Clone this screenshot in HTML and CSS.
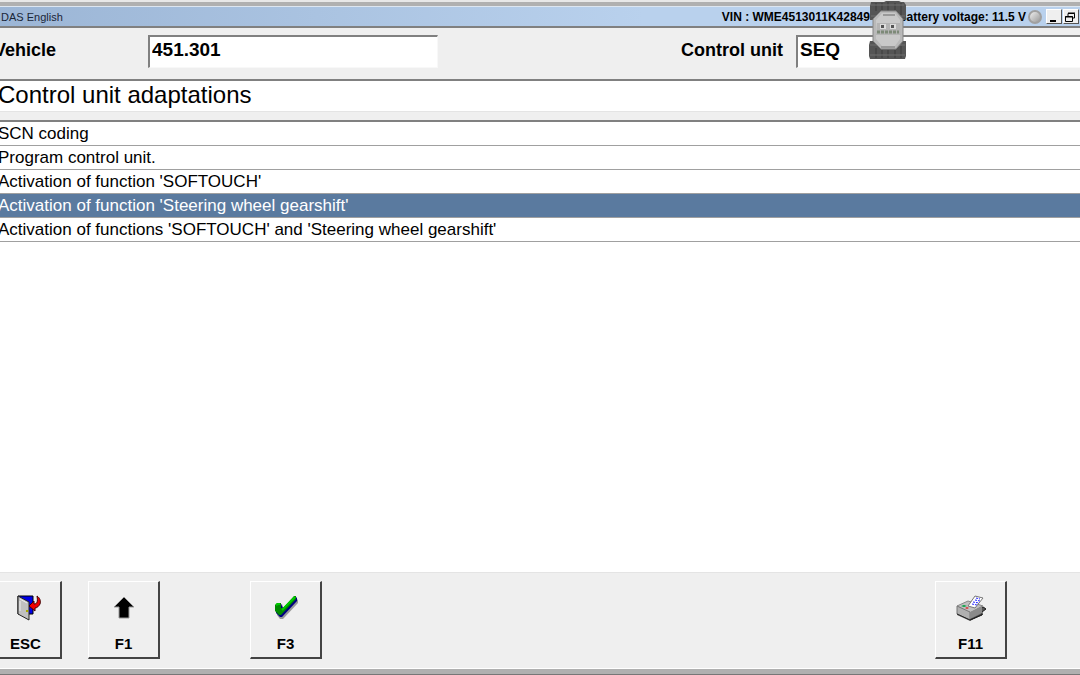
FILE: index.html
```html
<!DOCTYPE html>
<html lang="en">
<head>
    <meta charset="UTF-8">
    <meta name="viewport" content="width=device-width, initial-scale=1.0">
    <title>DAS English</title>
    <link rel="stylesheet" href="styles.css">
</head>
<body>
    <div class="window">
        <header class="title-bar">
            <span class="app-name">DAS English</span>
            <span class="vin">VIN : WME4513011K42849</span>
            <span class="battery">Battery voltage: 11.5 V</span>
            <span class="lamp"></span>
            <button class="win-button" aria-label="Minimize">
                <svg width="12" height="12" viewBox="0 0 12 12"><path d="M3 9h6v2H3z"/></svg>
            </button>
            <button class="win-button" aria-label="Restore">
                <svg width="12" height="12" viewBox="0 0 12 12" fill="none" stroke="#000"><path d="M4 5V2.500h6.500V7H9M4 2h7M1.500 5.500h7v5h-7zM1 6h8"/></svg>
            </button>
        </header>

        <div class="info-bar">
            <label class="vehicle-label" for="vehicle">Vehicle</label>
            <input class="field vehicle-field" type="text" id="vehicle" value="451.301">
            <label class="unit-label" for="unit">Control unit</label>
            <input class="field unit-field" type="text" id="unit" value="SEQ">
        </div>

        <h1 class="heading">Control unit adaptations</h1>

        <ul class="menu">
            <li><button class="menu-item">SCN coding</button></li>
            <li><button class="menu-item">Program control unit.</button></li>
            <li><button class="menu-item">Activation of function 'SOFTOUCH'</button></li>
            <li><button class="menu-item selected">Activation of function 'Steering wheel gearshift'</button></li>
            <li><button class="menu-item">Activation of functions 'SOFTOUCH' and 'Steering wheel gearshift'</button></li>
        </ul>

        <footer class="key-bar">
            <button class="key">
                <svg width="32" height="32" viewBox="0 0 32 32">
                    <path d="M8 4h15v18H8z" fill="#0000e8" stroke="#000"/>
                    <path d="M8 4l11 6v18L8 22z" fill="#c0c0c0" stroke="#222"/>
                    <path d="M10 7l7 4M10 9v10" stroke="#eee" fill="none"/>
                    <path d="M16 18h2v2h-2z" fill="#aa0"/>
                    <path d="M27 4c3 2 4 5 3 8-1 2-3 4-5 4v3l-6-5 5-5v3c3 0 4-2 3-8z" fill="#f00000" stroke="#400"/>
                </svg>
                <span>ESC</span>
            </button>
            <button class="key key-f1">
                <svg width="32" height="32" viewBox="0 0 32 32">
                    <path d="M16 5l10 10h-5v11H11V15H6z" fill="#000" stroke="#999"/>
                </svg>
                <span>F1</span>
            </button>
            <button class="key key-f3">
                <svg width="32" height="32" viewBox="0 0 32 32">
                    <path d="M8 14l4-2 2 6L26 6l2 2v3L13 27h-3L7 23z" fill="#999"/>
                    <path d="M6 13l5-1 2 4L25 4l2 2v3L12 25h-2l-4-4z" fill="#000080"/>
                    <path d="M5 13l2-2h4v5h2L24 4h2v3L11 23H9l-4-4z" fill="#008a00"/>
                    <path d="M6 13l2-1h2M12 18L25 5" stroke="#00cc00" stroke-width="2" fill="none"/>
                </svg>
                <span>F3</span>
            </button>
            <button class="key key-f11">
                <svg width="32" height="32" viewBox="0 0 32 32">
                    <path d="M2 15l10-5 17 5 2 2-4 3v3l-12 6L2 23z" fill="#777"/>
                    <path d="M15 21l13-6 3 2-4 3v3l-12 5z" fill="#555" stroke="#222"/>
                    <path d="M2 14l11-5 15 5-13 7z" fill="#c0c0c0" stroke="#888"/>
                    <path d="M2 14l13 6v8L2 22z" fill="#b0b0b0" stroke="#777"/>
                    <path d="M15 20l12-6v7l-12 6z" fill="#8a8a8a"/>
                    <path d="M2 22l13 6 13-6" stroke="#222" fill="none"/>
                    <path d="M13 14l7-10 8 2-8 10z" fill="#fff" stroke="#777"/>
                    <path d="M17 12l5 1M18 10l6 1M20 8l5 1M21 6l4 1" stroke="#2222ff" stroke-dasharray="2 1" fill="none"/>
                    <path d="M6 14l3-1 3 1-3 1z" fill="#00a040"/>
                    <path d="M10 16l2-1 2 1-2 1z" fill="#e03030"/>
                </svg>
                <span>F11</span>
            </button>
        </footer>
    </div>

    <!-- connected interface status -->
    <svg class="interface-icon" width="38" height="58" viewBox="0 0 38 58">
        <path d="M2 1h13l2-1h13l2 1h3l2 3v15H1V5z" fill="#555"/>
        <path d="M1 40h36v15l-1 3H1l-1-3V44z" fill="#555"/>
        <path d="M7 2v8M13 2v7M19 1v9M26 2v7M32 2v13M7 47v10M13 49v8M19 49v8M26 49v8M32 45v12" stroke="#3c3c3c"/>
        <path d="M2 4h33M2 15h34M1 44h35M1 54h35" stroke="#707070"/>
        <path d="M12 10h15l7 8v22l-7 8H12l-8-8V18z" fill="#b9b9b9" stroke="#858585"/>
        <path d="M13 12h13l5 7v19l-5 7H13l-6-7V19z" fill="#c9c9c9"/>
        <path d="M8 22h23l1 12H7z" fill="#b4b4b4"/>
        <path d="M11 23h6v5h-6zM21 23h6v5h-6z" fill="#ddd"/>
        <path d="M12 24h3v3h-3zM22 24h3v3h-3z" fill="#555"/>
        <path d="M8 31h22" stroke="#7d8a78" stroke-width="3" stroke-dasharray="3 1"/>
        <path d="M14 14h12M12 46h14" stroke="#999" stroke-width="2"/>
    </svg>
</body>
</html>
```
FILE: styles.css
```css
* {
    margin: 0;
    padding: 0;
    box-sizing: border-box;
}

body {
    background-color: #e8e8e8;
    color: #000000;
    font-family: "Liberation Sans", Arial, sans-serif;
    min-height: 100vh;
    padding-top: 2px;
    overflow: hidden;
}

button {
    font-family: inherit;
    color: inherit;
    border: none;
    cursor: pointer;
}

/* The window hangs over the left edge of the screen */
.window {
    display: flex;
    flex-direction: column;
    height: calc(100vh - 3px);
    margin-left: -10px;
    background-color: #efefef;
    border-top: 4px solid #b0b0b0;
    border-bottom: 5px solid #b0b0b0;
    box-shadow: 0 1px 0 #777777;
}

.title-bar {
    display: flex;
    align-items: center;
    height: 22px;
    padding-left: 11px;
    background: linear-gradient(to right, #9bb5d5, #b9d1ed 60%, #b9d1ed);
    border-top: 1px solid #dde6f0;
    border-bottom: 2px solid #808080;
    font-size: 12px;
    font-weight: bold;
    white-space: nowrap;
}

.app-name {
    font-size: 11px;
    font-weight: normal;
    color: #1a2638;
    margin-right: auto;
}

.battery {
    margin-left: 28px;
}

.lamp {
    width: 14px;
    height: 14px;
    margin: 0 4px 0 2px;
    border: 2px solid #a0a0a0;
    border-radius: 50%;
    background: linear-gradient(135deg, #eeeeee, #999999);
}

.win-button {
    width: 16px;
    height: 15px;
    margin-right: 1px;
    background-color: #efefef;
    border: 1px solid;
    border-color: #ffffff #555555 #555555 #ffffff;
}

.win-button svg {
    display: block;
}

.info-bar {
    display: flex;
    align-items: flex-start;
    height: 51px;
    padding: 7px 0 0 4px;
    font-size: 18px;
    font-weight: bold;
    line-height: 31px;
}

.vehicle-label {
    width: 154px;
}

.unit-label {
    margin-left: auto;
    margin-right: 13px;
}

.field {
    height: 33px;
    padding: 0 0 5px 2px;
    font: inherit;
    font-size: 19px;
    line-height: 24px;
    background-color: #ffffff;
    border: 1px solid #f8f8f8;
    border-top: 2px solid #808080;
    border-left: 2px solid #808080;
    border-radius: 0;
}

.vehicle-field {
    width: 290px;
}

.unit-field {
    width: 284px;
    border-right: none;
}

.heading {
    height: 33px;
    padding-left: 8px;
    font-size: 24px;
    font-weight: normal;
    line-height: 28px;
    background-color: #ffffff;
    border-top: 2px solid #808080;
    border-bottom: 1px solid #e4e4e4;
}

.menu {
    flex: 1;
    margin-top: 8px;
    list-style: none;
    background-color: #ffffff;
    border-top: 2px solid #808080;
}

.menu-item {
    display: block;
    width: 100%;
    height: 24px;
    padding-left: 8px;
    font-size: 17px;
    line-height: 23px;
    text-align: left;
    background-color: #ffffff;
    border-bottom: 1px solid #a0a0a0;
}

.menu-item.selected {
    background-color: #5a7a9f;
    color: #ffffff;
}

.key-bar {
    display: flex;
    height: 97px;
    padding-top: 8px;
    border-top: 1px solid #e4e4e4;
    border-bottom: 1px solid #ffffff;
}

.key {
    display: flex;
    flex-direction: column;
    align-items: center;
    width: 72px;
    height: 78px;
    padding-top: 10px;
    font-size: 15px;
    font-weight: bold;
    background-color: #efefef;
    border: 1px solid #ffffff;
    border-right: 2px solid #444444;
    border-bottom: 2px solid #444444;
}

.key svg {
    margin-bottom: 11px;
}

.key-f1 {
    margin-left: 26px;
}

.key-f3 {
    margin-left: 90px;
}

.key-f11 {
    margin-left: auto;
    margin-right: 73px;
}

.interface-icon {
    position: absolute;
    top: 1px;
    right: 173px;
}
```
